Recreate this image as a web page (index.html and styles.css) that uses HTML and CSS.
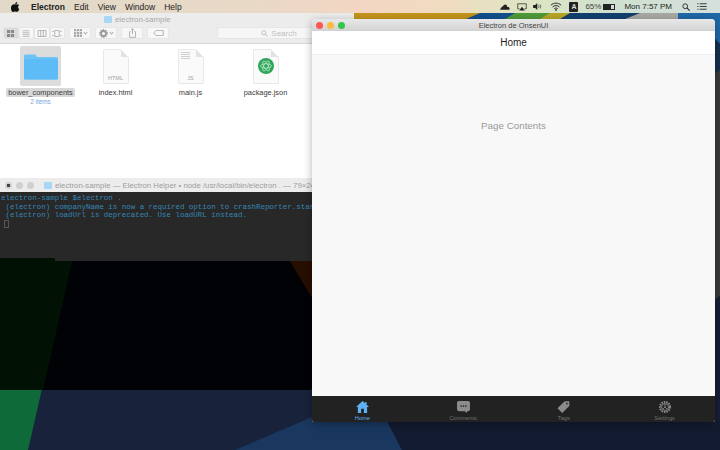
FILE: index.html
```html
<!DOCTYPE html>
<html lang="en">
<head>
    <meta charset="UTF-8">
    <title>Electron de OnsenUI</title>
    <link rel="stylesheet" href="styles.css">
</head>
<body>
<div class="desktop">

    <!-- wallpaper -->
    <svg class="wallpaper" viewBox="0 0 720 450" width="720" height="450">
        <rect width="720" height="450" fill="#18223a"/>
        <polygon points="0,380 44,380 28,450 0,450" fill="#0f6a3a"/>
        <polygon points="235,450 312,417 385,417 402,450" fill="#19375f"/>
        <polygon points="402,450 385,417 720,417 720,450" fill="#131b31"/>
        <polygon points="354,13 500,13 480,19 354,19" fill="#c4951c"/>
        <polygon points="480,13 530,13 515,19 466,19" fill="#12508c"/>
        <polygon points="515,13 570,13 560,19 505,19" fill="#4e9a3a"/>
        <polygon points="550,13 580,13 570,19 540,19" fill="#b8a626"/>
        <polygon points="570,13 640,13 625,19 560,19" fill="#12406e"/>
        <polygon points="640,13 680,13 678,19 625,19" fill="#a8a8a4"/>
        <polygon points="678,13 720,13 720,19 678,19" fill="#1f68a8"/>
        <polygon points="712,19 720,19 720,44 712,36" fill="#1f68a8"/>
        <polygon points="712,36 720,44 720,70 712,75" fill="#16304f"/>
        <polygon points="712,75 720,70 720,296 712,302" fill="#3a3a3a"/>
        <polygon points="712,302 720,296 720,420 712,420" fill="#161e36"/>
    </svg>

    <!-- menu bar -->
    <div class="menubar">
        <div class="menu-left">
            <svg class="apple" viewBox="0 0 12 14" width="9" height="10"><path d="M8.4 0c.1 1-.3 1.900-.8 2.500-.6.700-1.400 1.100-2.200 1-.1-.9.300-1.800.8-2.400C6.700.5 7.700.1 8.400 0zM11.300 10.200c-.3.800-.5 1.100-1 1.800-.6 1-1.500 2-2.500 2-1 0-1.200-.6-2.400-.6-1.300 0-1.500.6-2.500.6-1 0-1.800-1-2.400-1.900C-.9 9.800-.6 6.200 1 4.500c.8-.8 1.800-1.200 2.700-1.200 1 0 1.600.6 2.400.6.800 0 1.300-.6 2.500-.6.900 0 1.800.5 2.500 1.300-2.200 1.200-1.800 4.400.2 5.600z" fill="#111"/></svg>
            <span class="menu-app">Electron</span>
            <span>Edit</span>
            <span>View</span>
            <span>Window</span>
            <span>Help</span>
        </div>
        <div class="menu-right">
            <svg viewBox="0 0 14 8" width="10" height="6"><path d="M1 8c-1 0-1-2 .5-2.300C2 3.800 3 3 4.200 3.300 5 1 7 0 8.500 1c1 .6 1.500 1.500 1.500 2.500 1.800 0 3.500 1.200 3.500 3 0 1-.5 1.500-1 1.500z" fill="#222"/></svg>
            <svg class="airplay" viewBox="0 0 14 11" width="10" height="8"><path d="M3.500 8H1V1h12v7h-2.500" fill="none" stroke="#222"/><polygon points="7,5 11,10.500 3,10.500" fill="#222"/></svg>
            <svg viewBox="0 0 14 10" width="10" height="7"><polygon points="0,3 3,3 6,0 6,10 3,7 0,7" fill="#222"/><path d="M8 3c.7 1.200.7 2.800 0 4M10 2c1.200 2 1.200 4 0 6" fill="none" stroke="#333"/></svg>
            <svg viewBox="0 0 14 10" width="12" height="9"><path d="M1 3.500c3.400-3.200 8.600-3.200 12 0M3 5.500c2.300-2.100 5.700-2.100 8 0M5 7.500c1.200-1 2.800-1 4 0" fill="none" stroke="#222" stroke-width="1.100"/><circle cx="7" cy="9" r="1" fill="#222"/></svg>
            <span class="input-badge">A</span>
            <span class="battery-pct">65%</span>
            <span class="battery"><span class="battery-fill"></span></span>
            <span class="clock">Mon 7:57 PM</span>
            <svg viewBox="0 0 10 10" width="8" height="8"><circle cx="4" cy="4" r="3" fill="none" stroke="#222" stroke-width="1.100"/><path d="M6.200 6.200 9.500 9.500" stroke="#222" stroke-width="1.300"/></svg>
            <svg viewBox="0 0 12 9" width="10" height="7"><path d="M3 1h9M3 4.500h9M3 8h9" stroke="#222" stroke-width="1.100"/><path d="M0 1h1.500M0 4.500h1.500M0 8h1.500" stroke="#222" stroke-width="1.100"/></svg>
        </div>
    </div>

    <!-- finder -->
    <div class="window finder">
        <div class="finder-top">
            <div class="finder-title">
                <span class="mini-folder"></span>
                <span>electron-sample</span>
            </div>
            <div class="toolbar">
                <div class="btn-group">
                    <span class="tool tool-on">
                        <svg viewBox="0 0 9 9" width="7" height="7"><path d="M0 0h4v4H0zM5 0h4v4H5zM0 5h4v4H0zM5 5h4v4H5z" fill="#8a8a8a"/></svg>
                    </span>
                    <span class="tool">
                        <svg viewBox="0 0 9 9" width="8" height="7"><path d="M0 1h9M0 3.500h9M0 6h9M0 8.500h9" stroke="#aaa"/></svg>
                    </span>
                    <span class="tool">
                        <svg viewBox="0 0 10 8" width="10" height="7"><path d="M.5.500h9v7h-9zM3.500.500v7M6.500.500v7" fill="none" stroke="#aaa"/></svg>
                    </span>
                    <span class="tool">
                        <svg viewBox="0 0 11 8" width="10" height="7"><path d="M3 .500h5v7H3zM0 1.500h2M0 6.500h2M9 1.500h2M9 6.500h2" fill="none" stroke="#aaa"/></svg>
                    </span>
                </div>
                <span class="tool tool-wide">
                    <svg viewBox="0 0 9 9" width="8" height="8"><path d="M0 0h2.500v2.500H0zM3.300 0h2.500v2.500H3.300zM6.500 0H9v2.500H6.500zM0 3.300h2.500v2.500H0zM3.300 3.300h2.500v2.500H3.300zM6.500 3.300H9v2.500H6.500zM0 6.500h2.500V9H0zM3.300 6.500h2.500V9H3.300zM6.500 6.500H9V9H6.500z" fill="#aaa"/></svg>
                    <i class="caret"></i>
                </span>
                <span class="tool tool-wide">
                    <svg viewBox="0 0 10 10" width="9" height="9"><circle cx="5" cy="5" r="2.800" fill="none" stroke="#999" stroke-width="2"/><circle cx="5" cy="5" r="4.300" fill="none" stroke="#999" stroke-width="1.200" stroke-dasharray="1.500 1.200"/></svg>
                    <i class="caret"></i>
                </span>
                <span class="tool tool-wide">
                    <svg viewBox="0 0 8 11" width="7" height="10"><path d="M2 4H.5v6.500h7V4H6M4 7V.8M2.300 2.300 4 .6l1.700 1.700" fill="none" stroke="#aaa"/></svg>
                </span>
                <span class="tool tool-wide">
                    <svg viewBox="0 0 12 7" width="11" height="6"><path d="M3 .500h8.500v6H3L.5 3.500z" fill="none" stroke="#aaa"/></svg>
                </span>
                <div class="search">
                    <svg viewBox="0 0 10 10" width="7" height="7"><circle cx="4" cy="4" r="3" fill="none" stroke="#bbb" stroke-width="1.300"/><path d="M6.200 6.200 9.500 9.500" stroke="#bbb" stroke-width="1.400"/></svg>
                    <span>Search</span>
                </div>
            </div>
        </div>
        <div class="files">
            <div class="file">
                <div class="thumb thumb-on">
                    <svg viewBox="0 0 34 28" width="34" height="28"><path d="M0 4c0-1 .6-1.500 1.500-1.500h9c.8 0 1 .3 1.500 1L13 5h19.500c.9 0 1.500.6 1.500 1.500V26c0 1-.6 1.500-1.500 1.500h-31C.6 27.500 0 27 0 26z" fill="#6cc4f6"/><path d="M0 7h34v19c0 1-.6 1.500-1.500 1.500h-31C.6 27.500 0 27 0 26z" fill="#5dbcf5"/></svg>
                </div>
                <span class="file-name name-on">bower_components</span>
                <span class="file-sub">2 items</span>
            </div>
            <div class="file">
                <div class="thumb">
                    <div class="doc"><i class="fold"></i><span class="doc-label">HTML</span></div>
                </div>
                <span class="file-name">index.html</span>
            </div>
            <div class="file">
                <div class="thumb">
                    <div class="doc"><i class="fold"></i><i class="doc-lines"></i><span class="doc-label">JS</span></div>
                </div>
                <span class="file-name">main.js</span>
            </div>
            <div class="file">
                <div class="thumb">
                    <div class="doc"><i class="fold"></i>
                        <svg class="atom" viewBox="0 0 16 16" width="16" height="16"><circle cx="8" cy="8" r="8" fill="#2ea65a"/><g fill="none" stroke="#c5ecd2" stroke-width=".7"><ellipse cx="8" cy="8" rx="5.500" ry="2.200"/><ellipse cx="8" cy="8" rx="5.500" ry="2.200" transform="rotate(60 8 8)"/><ellipse cx="8" cy="8" rx="5.500" ry="2.200" transform="rotate(120 8 8)"/></g></svg>
                    </div>
                </div>
                <span class="file-name">package.json</span>
            </div>
        </div>
    </div>

    <!-- terminal -->
    <div class="window terminal">
        <div class="term-title">
            <span class="term-dot term-dot-close"></span>
            <span class="term-dot"></span>
            <span class="term-dot"></span>
            <span class="mini-folder term-folder"></span>
            <span class="term-name">electron-sample — Electron Helper • node /usr/local/bin/electron . — 79×24</span>
        </div>
        <div class="term-body">
            <div class="term-line">electron-sample $electron .</div>
            <div class="term-line"> (electron) companyName is now a required option to crashReporter.start</div>
            <div class="term-line"> (electron) loadUrl is deprecated. Use loadURL instead.</div>
            <div class="term-cursor"></div>
        </div>
        <div class="term-shade">
            <svg viewBox="0 0 312 132" width="312" height="132"><polygon points="0,0 73,0 43,132 0,132" fill="#011204"/><polygon points="288,0 312,0 312,40" fill="#260e00"/><rect x="55" width="257" height="3" fill="#282828"/></svg>
        </div>
    </div>

    <!-- electron app -->
    <div class="window app">
        <div class="app-title">
            <span class="light light-red"></span>
            <span class="light light-yellow"></span>
            <span class="light light-green"></span>
            <span class="app-name">Electron de OnsenUI</span>
        </div>
        <div class="navbar">Home</div>
        <div class="page">Page Contents</div>
        <div class="tabbar">
            <div class="tab tab-on">
                <svg viewBox="0 0 14 13" width="13" height="12"><path d="M7 0 0 6.500h2V13h3.500V8.500h3V13H12V6.500h2L11.500 4V1H10v1.500z" fill="#5fb0f2"/></svg>
                <span>Home</span>
            </div>
            <div class="tab">
                <svg viewBox="0 0 14 13" width="13" height="12"><path d="M2 0h10c1.200 0 2 .8 2 2v7c0 1.200-.8 2-2 2h-1l-.5 2-2-2H2c-1.200 0-2-.8-2-2V2C0 .8.800 0 2 0z" fill="#8c8c8c"/><circle cx="4.500" cy="5.500" r=".9" fill="#222"/><circle cx="7" cy="5.500" r=".9" fill="#222"/><circle cx="9.500" cy="5.500" r=".9" fill="#222"/></svg>
                <span>Comments</span>
            </div>
            <div class="tab">
                <svg viewBox="0 0 14 14" width="13" height="12"><path d="M8 .500 13.500 0 14 5.500 5.500 14 0 8.500z" fill="#8c8c8c"/><circle cx="11" cy="3" r="1" fill="#222"/></svg>
                <span>Tags</span>
            </div>
            <div class="tab">
                <svg viewBox="0 0 14 14" width="12" height="12"><circle cx="7" cy="7" r="5.800" fill="none" stroke="#8c8c8c" stroke-width="2.400" stroke-dasharray="1.800 1"/><circle cx="7" cy="7" r="4" fill="none" stroke="#8c8c8c"/><path d="M7 3.500V7L4.500 9.500M7 7l2.500 2.500" fill="none" stroke="#8c8c8c"/></svg>
                <span>Settings</span>
            </div>
        </div>
    </div>

</div>
</body>
</html>
```

FILE: styles.css
```css
* {
    box-sizing: border-box;
}
body {
    margin: 0;
    font-family: "Liberation Sans", Arial, sans-serif;
    background-color: #18223a;
}
.desktop {
    position: relative;
    width: 720px;
    height: 450px;
    overflow: hidden;
}
.wallpaper {
    position: absolute;
    left: 0;
    top: 0;
}

/* menu bar */
.menubar {
    position: absolute;
    left: 0;
    top: 0;
    width: 720px;
    height: 13px;
    display: flex;
    justify-content: space-between;
    align-items: center;
    font-size: 8.5px;
    color: #222;
    background: linear-gradient(90deg, #e2d9c8 0%, #e8d9c6 35%, #f3d6c4 50%, #f0dcc0 62%, #dbe6c4 75%, #cfe0d0 85%, #d5e0dc 100%);
}
.menu-left {
    display: flex;
    align-items: center;
    gap: 9px;
    padding-left: 11px;
}
.apple {
    margin-right: 2px;
}
.menu-app {
    font-weight: bold;
}
.menu-right {
    display: flex;
    align-items: center;
    gap: 7px;
    padding-right: 13px;
    font-size: 8px;
}
.airplay {
    margin-right: -1px;
}
.input-badge {
    width: 9px;
    height: 10px;
    background-color: #222;
    color: #ddd;
    border-radius: 1px;
    font-size: 7px;
    font-weight: bold;
    text-align: center;
    line-height: 10px;
}
.battery-pct {
    color: #444;
}
.battery {
    width: 12px;
    height: 6px;
    border: 1px solid #222;
    margin-left: -5px;
}
.battery-fill {
    display: block;
    width: 7px;
    height: 4px;
    background-color: #222;
}
.clock {
    margin-left: 2px;
    margin-right: 3px;
}

/* windows */
.window {
    position: absolute;
}

/* finder */
.finder {
    left: 0;
    top: 13px;
    width: 354px;
    height: 165px;
    background-color: #fff;
    border-radius: 3px 3px 0 0;
    display: flex;
    flex-direction: column;
}
.finder-top {
    height: 31px;
    background-color: #ececec;
    border-bottom: 1px solid #d6d6d6;
}
.finder-title {
    height: 13px;
    padding-left: 104px;
    display: flex;
    align-items: center;
    gap: 3px;
    font-size: 7.800px;
    color: #a8a8a8;
}
.mini-folder {
    display: block;
    width: 8px;
    height: 7px;
    background-color: #a6d8f6;
    border-radius: 1px;
}
.toolbar {
    display: flex;
    align-items: center;
    gap: 4px;
    padding: 1px 0 0 3px;
}
.btn-group {
    display: flex;
    width: 62px;
}
.tool {
    height: 12px;
    flex: 1;
    background-color: #f7f7f7;
    border: 1px solid #e6e6e6;
    display: flex;
    align-items: center;
    justify-content: center;
    gap: 2px;
    border-radius: 2px;
}
.tool-on {
    background-color: #dadada;
}
.tool-wide {
    flex: none;
    width: 22px;
}
.caret {
    display: block;
    width: 3px;
    height: 3px;
    border-right: 1px solid #aaa;
    border-bottom: 1px solid #aaa;
    transform: rotate(45deg);
    margin-top: -2px;
}
.search {
    width: 124px;
    height: 12px;
    margin-left: 44px;
    background-color: #f6f6f6;
    border: 1px solid #e6e6e6;
    border-radius: 2px;
    display: flex;
    align-items: center;
    justify-content: center;
    gap: 3px;
    font-size: 8px;
    color: #c0c0c0;
}
.files {
    display: flex;
    padding-top: 2px;
    padding-left: 3px;
    flex: 1;
}
.file {
    width: 75px;
    display: flex;
    flex-direction: column;
    align-items: center;
    font-size: 7.400px;
    color: #3a3a3a;
}
.thumb {
    width: 41px;
    height: 40px;
    display: flex;
    align-items: center;
    justify-content: center;
}
.thumb-on {
    background-color: #dcdcdc;
    border-radius: 2px;
}
.doc {
    position: relative;
    width: 26px;
    height: 35px;
    background-color: #fafafa;
    border: 1px solid #e8e8e8;
    border-radius: 1px;
    display: flex;
    align-items: center;
    justify-content: center;
}
.fold {
    position: absolute;
    right: -1px;
    top: -1px;
    width: 8px;
    height: 8px;
    background: linear-gradient(225deg, #fff 50%, #e2e2e2 50%);
}
.doc-label {
    position: absolute;
    left: 0;
    right: 0;
    bottom: 2px;
    text-align: center;
    font-size: 5.500px;
    color: #a0a0a0;
}
.doc-lines {
    position: absolute;
    left: 2px;
    top: 2px;
    width: 9px;
    height: 8px;
    background: repeating-linear-gradient(180deg, #d0d0d0 0 1px, transparent 1px 2px);
}
.file-name {
    margin-top: 2px;
    padding: 0 2px;
    line-height: 9px;
    white-space: nowrap;
}
.name-on {
    background-color: #d8d8d8;
    border-radius: 2px;
}
.file-sub {
    margin-top: 1px;
    font-size: 6.400px;
    line-height: 8px;
    color: #7aa8de;
}

/* terminal */
.terminal {
    left: 0;
    top: 178px;
    width: 312px;
    height: 212px;
    background-color: #282828;
    overflow: hidden;
}
.term-title {
    height: 14px;
    background-color: #ececec;
    display: flex;
    align-items: center;
    padding-left: 5px;
    font-size: 7.800px;
    color: #9c9c9c;
    white-space: nowrap;
    overflow: hidden;
}
.term-dot {
    flex-shrink: 0;
    width: 7px;
    height: 7px;
    margin-right: 4px;
    border-radius: 50%;
    background-color: #d0d0d0;
}
.term-dot-close {
    background-image: radial-gradient(circle, #444 0 1.500px, transparent 1.500px);
}
.term-folder {
    margin: 0 3px 0 6px;
    flex-shrink: 0;
}
.term-body {
    padding: 2px 0 0 1px;
    font-family: "Liberation Mono", monospace;
    font-size: 7.460px;
    line-height: 8.500px;
    color: #3587b4;
}
.term-line {
    white-space: pre;
}
.term-cursor {
    width: 5px;
    height: 8px;
    margin-left: 3px;
    border: 1px solid #555;
}
.term-shade {
    position: absolute;
    left: 0;
    top: 80px;
    width: 312px;
    height: 132px;
    background-color: #010206;
    border-radius: 0 0 2px 2px;
    overflow: hidden;
}
.term-shade svg {
    display: block;
}

/* electron app */
.app {
    left: 312px;
    top: 19px;
    width: 403px;
    height: 403px;
    display: flex;
    flex-direction: column;
    background-color: #f8f8f8;
    border-radius: 4px 4px 2px 2px;
    overflow: hidden;
    box-shadow: 0 2px 8px rgba(0, 0, 0, 0.3);
}
.app-title {
    position: relative;
    height: 12px;
    background: linear-gradient(180deg, #e8e8e8, #d2d2d2);
    display: flex;
    align-items: center;
    gap: 4px;
    padding-left: 4px;
    flex-shrink: 0;
}
.light {
    width: 7px;
    height: 7px;
    border-radius: 50%;
}
.light-red {
    background-color: #fc5753;
}
.light-yellow {
    background-color: #fdbc40;
}
.light-green {
    background-color: #33c748;
}
.app-name {
    position: absolute;
    left: 0;
    right: 0;
    text-align: center;
    font-size: 7.500px;
    color: #444;
}
.navbar {
    height: 24px;
    background-color: #fff;
    border-bottom: 1px solid #eeeeee;
    text-align: center;
    font-size: 10px;
    line-height: 24px;
    color: #1f1f1f;
    flex-shrink: 0;
}
.page {
    flex: 1;
    padding-top: 65px;
    text-align: center;
    font-size: 9.800px;
    color: #999;
}
.tabbar {
    height: 26px;
    background-color: #222222;
    display: flex;
    flex-shrink: 0;
}
.tab {
    flex: 1;
    display: flex;
    flex-direction: column;
    align-items: center;
    padding-top: 5px;
    font-size: 5.700px;
    color: #707070;
}
.tab span {
    line-height: 7px;
    margin-top: 2px;
}
.tab-on {
    color: #5fb0f2;
}
```
